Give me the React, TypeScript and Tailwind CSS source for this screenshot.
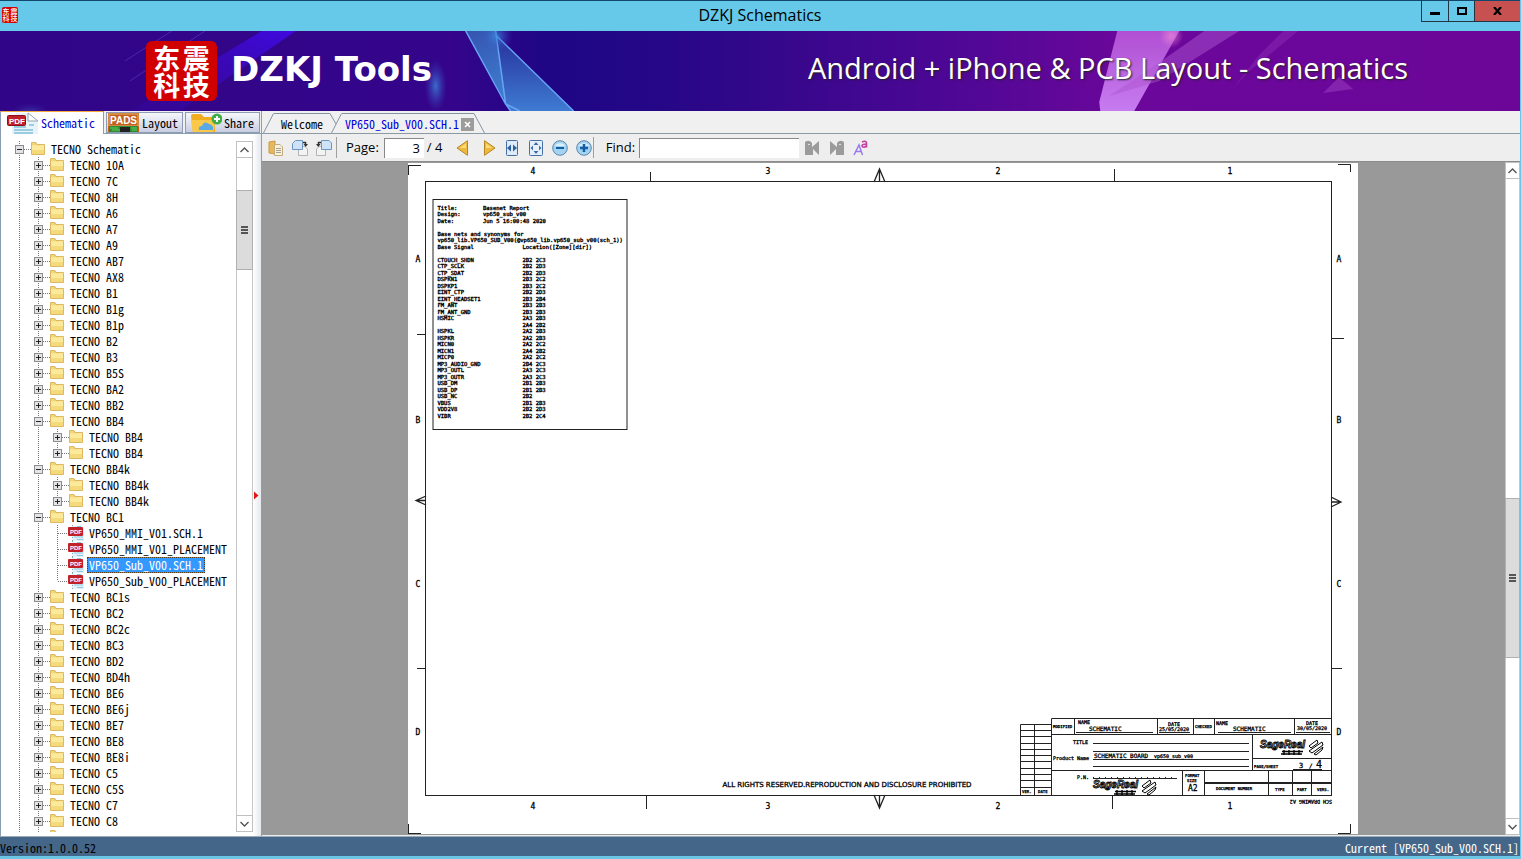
import React from "react";

const MONO = "font-['Noto_Sans_CJK_SC','Liberation_Mono',monospace] [font-feature-settings:'hwid']";

type Node = { name: string; level: number; kind: "open" | "closed" | "pdf"; selected?: boolean; last?: boolean };

const closed = (names: string[]): Node[] => names.map((n) => ({ name: "TECNO " + n, level: 1, kind: "closed" }));

const NODES: Node[] = [
  { name: "TECNO Schematic", level: 0, kind: "open" },
  ...closed(["10A", "7C", "8H", "A6", "A7", "A9", "AB7", "AX8", "B1", "B1g", "B1p", "B2", "B3", "B5S", "BA2", "BB2"]),
  { name: "TECNO BB4", level: 1, kind: "open" },
  { name: "TECNO BB4", level: 2, kind: "closed" },
  { name: "TECNO BB4", level: 2, kind: "closed", last: true },
  { name: "TECNO BB4k", level: 1, kind: "open" },
  { name: "TECNO BB4k", level: 2, kind: "closed" },
  { name: "TECNO BB4k", level: 2, kind: "closed", last: true },
  { name: "TECNO BC1", level: 1, kind: "open" },
  { name: "VP650_MMI_V01.SCH.1", level: 2, kind: "pdf" },
  { name: "VP650_MMI_V01_PLACEMENT", level: 2, kind: "pdf" },
  { name: "VP650_Sub_V00.SCH.1", level: 2, kind: "pdf", selected: true },
  { name: "VP650_Sub_V00_PLACEMENT", level: 2, kind: "pdf", last: true },
  ...closed(["BC1s", "BC2", "BC2c", "BC3", "BD2", "BD4h", "BE6", "BE6j", "BE7", "BE8", "BE8i", "C5", "C5S", "C7", "C8"]),
  { name: "", level: 1, kind: "closed" },
];

function Guide() {
  return (
    <svg width="19" height="16" className="shrink-0" aria-hidden="true">
      <path d="M4.5 0V16" stroke="#777" strokeDasharray="1 1" />
    </svg>
  );
}

function Expander({ kind, last }: { kind: Node["kind"]; last?: boolean }) {
  return (
    <svg width="16" height="16" className="shrink-0" aria-hidden="true">
      <path d={last ? "M4.5 0V8" : "M4.5 0V16"} stroke="#777" strokeDasharray="1 1" />
      <path d="M5 8.5H16" stroke="#777" strokeDasharray="1 1" />
      {kind !== "pdf" && (
        <>
          <rect x="0.5" y="4.5" width="8" height="8" fill="#e4e4e8" stroke="#8c8c8c" />
          <path d="M2 8.5H7" stroke="#222" />
          {kind === "closed" && <path d="M4.5 6V11" stroke="#222" />}
        </>
      )}
    </svg>
  );
}

function FolderIcon() {
  return (
    <svg width="15" height="16" className="shrink-0" aria-hidden="true">
      <path d="M0.5 1.5H5L6 3.5H13.5V13.5H0.5Z" fill="#f0d575" stroke="#dcb862" />
      <path d="M1 4L6 4.5L13 4V13H1Z" fill="#fbea9c" />
      <path d="M1 9H13V13H1Z" fill="#f5da7c" />
    </svg>
  );
}

function PdfIcon() {
  return (
    <svg width="15" height="16" className="shrink-0 overflow-visible" aria-hidden="true">
      <path d="M3 1H12L15 4V16H3Z" fill="#e2f2f8" />
      <path d="M5 12H14M8 14.5H14M8 1.5H12" stroke="#8ec8dc" />
      <path d="M3.5 0V16" stroke="#88aab5" strokeDasharray="1 2" />
      <rect x="-1" y="2" width="15" height="9" rx="1" fill="#c2202b" />
      <text x="1" y="9" fontSize="6" fontWeight="700" fill="#fff" fontFamily="Liberation Sans, sans-serif">PDF</text>
    </svg>
  );
}

function TreeRow({ node }: { node: Node }) {
  return (
    <li className="flex h-4 shrink-0 items-center">
      {Array.from({ length: node.level }, (_, i) => <Guide key={i} />)}
      <Expander kind={node.kind} last={node.last} />
      {node.kind === "pdf" ? <PdfIcon /> : <FolderIcon />}
      {node.name && (
        <button
          className={
            "ml-[3px] h-4 border border-dotted px-px text-left text-xs leading-[14px] whitespace-pre " +
            (node.selected ? "border-[#5a3a10] bg-[#3399ff] text-white" : "border-transparent text-black")
          }
        >
          {node.name}
        </button>
      )}
    </li>
  );
}

function ScrollBar({ before, after, thumb, width }: { before: string; after: string; thumb: string; width: string }) {
  const button = "flex h-[17px] w-full shrink-0 items-center justify-center border border-[#c0c0c0] bg-white";
  return (
    <div className={"flex shrink-0 flex-col bg-white " + width}>
      <button className={button} aria-label="Scroll up">
        <svg width="9" height="6" aria-hidden="true"><path d="M0.5 5L4.5 1L8.5 5" fill="none" stroke="#555" strokeWidth="1.4" /></svg>
      </button>
      <div className={"border-x border-[#c8c8c8] " + before} />
      <div className={"flex w-full shrink-0 items-center justify-center border border-[#b0b0b0] bg-[#dcdcdc] " + thumb}>
        <svg width="7" height="8" aria-hidden="true"><path d="M0 1H7M0 4H7M0 7H7" stroke="#555" strokeWidth="2" /></svg>
      </div>
      <div className={"border-x border-[#c8c8c8] " + after} />
      <button className={button} aria-label="Scroll down">
        <svg width="9" height="6" aria-hidden="true"><path d="M0.5 1L4.5 5L8.5 1" fill="none" stroke="#555" strokeWidth="1.4" /></svg>
      </button>
    </div>
  );
}

function TitleBar() {
  return (
    <header className="flex h-[31px] shrink-0 items-start border-t border-[#12466a] bg-[#66c9ea]">
      <div className="flex w-[100px] px-[2px] pt-[6px]">
        <div className="grid h-4 w-4 grid-cols-2 content-center justify-items-center rounded-[2px] bg-[#d40000] font-['Noto_Sans_CJK_SC',sans-serif] text-[7px] leading-[7px] font-medium text-white">
          <span>东</span><span>震</span><span>科</span><span>技</span>
        </div>
      </div>
      <h1 className="flex-1 text-center font-['Open_Sans',sans-serif] text-base leading-[29px] text-black">DZKJ Schematics</h1>
      <div className="flex h-[21px] w-[100px] justify-end">
        <button aria-label="Minimize" className="flex w-7 items-end justify-center border-x border-b border-[#234] pb-[6px]">
          <span className="h-[3px] w-[10px] bg-black" />
        </button>
        <button aria-label="Maximize" className="flex w-[26px] items-center justify-center border-r border-b border-[#234]">
          <span className="h-2 w-[10px] border-2 border-black" />
        </button>
        <button aria-label="Close" className="flex w-[45px] items-center justify-center border-b border-[#234] bg-[#c75050]">
          <svg width="9" height="8" aria-hidden="true"><path d="M1 0L8 8M8 0L1 8" stroke="#000" strokeWidth="2.2" /></svg>
        </button>
      </div>
    </header>
  );
}

function Banner() {
  return (
    <div className="relative flex h-20 shrink-0 items-center overflow-hidden bg-[#300688] pr-28 pl-[146px]">
      <svg className="absolute inset-0 h-full w-full" viewBox="0 0 1521 80" preserveAspectRatio="none" aria-hidden="true">
        <defs>
          <linearGradient id="base" x1="0" x2="1">
            <stop offset="0" stopColor="#310588" />
            <stop offset="0.3" stopColor="#34058a" />
            <stop offset="0.36" stopColor="#1e0684" />
            <stop offset="0.42" stopColor="#230786" />
            <stop offset="0.5" stopColor="#33078a" />
            <stop offset="0.62" stopColor="#4c0794" />
            <stop offset="0.74" stopColor="#6b079b" />
            <stop offset="1" stopColor="#6b0699" />
          </linearGradient>
          <linearGradient id="beam" x1="1" x2="0" y2="1">
            <stop offset="0" stopColor="#4009e0" />
            <stop offset="1" stopColor="#380bb0" stopOpacity="0.2" />
          </linearGradient>
          <linearGradient id="shard" x1="0" x2="0.3" y2="1">
            <stop offset="0" stopColor="#3553b0" />
            <stop offset="1" stopColor="#3d7fd0" />
          </linearGradient>
          <linearGradient id="facet" x1="0" x2="0" y2="1">
            <stop offset="0" stopColor="#26309c" />
            <stop offset="1" stopColor="#3f7bd2" />
          </linearGradient>
          <linearGradient id="pink" x1="0" x2="0" y2="1">
            <stop offset="0" stopColor="#b04fd2" />
            <stop offset="1" stopColor="#c77cf0" />
          </linearGradient>
          <radialGradient id="glow">
            <stop offset="0" stopColor="#3b8fe0" stopOpacity="0.75" />
            <stop offset="1" stopColor="#3b50c0" stopOpacity="0" />
          </radialGradient>
          <radialGradient id="flare">
            <stop offset="0" stopColor="#f088d8" stopOpacity="0.7" />
            <stop offset="1" stopColor="#f088d8" stopOpacity="0" />
          </radialGradient>
        </defs>
        <rect width="1521" height="80" fill="url(#base)" />
        <path d="M262 0H296L180 80H130Z" fill="url(#beam)" />
        <path d="M205 0L130 50M172 0L125 30" stroke="#5b3fc4" strokeOpacity="0.6" />
        <ellipse cx="436" cy="55" rx="11" ry="26" fill="url(#glow)" />
        <ellipse cx="30" cy="82" rx="20" ry="10" fill="url(#glow)" opacity="0.5" />
        <path d="M466 0H496L506 73L511 80L503 66Z" fill="url(#shard)" />
        <path d="M496 5L574 80H510L506 72Z" fill="url(#facet)" />
        <path d="M466 0L506 73L511 80M496 0L506 73L520 80M497 5L574 80" fill="none" stroke="#68a5f5" strokeWidth="1.5" />
        <circle cx="497" cy="5" r="16" fill="url(#glow)" />
        <path d="M1118 0H1180L1135 80H1101L1100 71Z" fill="url(#pink)" />
        <path d="M1205 0H1240L1160 50L1110 65L1165 28Z" fill="#ae55d0" fillOpacity="0.5" />
        <path d="M1284 0H1299L1248 42L1232 60L1260 24Z" fill="#9a3cc0" fillOpacity="0.35" />
        <path d="M1340 46L1354 58L1324 62Z" fill="#9538bd" fillOpacity="0.6" />
        <circle cx="1172" cy="5" r="12" fill="url(#flare)" />
      </svg>
      <div className="relative grid h-[60px] w-[71px] grid-cols-2 content-center justify-items-center rounded-md bg-[#d10000] px-[6px] font-['Noto_Sans_CJK_SC',sans-serif] text-[27px] leading-[27px] font-bold text-white">
        <span>东</span><span>震</span><span>科</span><span>技</span>
      </div>
      <span className="relative ml-[14px] pb-1 font-['DejaVu_Sans',sans-serif] text-[34px] leading-none font-bold text-white">DZKJ Tools</span>
      <span className="relative ml-auto pb-2 font-['Open_Sans',sans-serif] text-[29px] leading-none text-white [text-shadow:1px_1px_2px_#222]">
        Android + iPhone &amp; PCB Layout - Schematics
      </span>
    </div>
  );
}

function SideTabs() {
  const idle = "flex h-[21px] items-center overflow-hidden border border-[#8c9cb4] bg-linear-to-b from-[#f6f7fb] to-[#c9cde2] text-xs text-black";
  return (
    <div className="flex h-[23px] shrink-0 items-end border-b border-[#8ba0ae] bg-[#f0f0f0]" role="tablist">
      <button role="tab" aria-selected="true" className="-mb-px flex h-6 w-[104px] items-center overflow-hidden border-t-2 border-r border-l border-[#8c9cb4] border-t-[#f5a83c] bg-white pl-[5px] text-xs text-[#0000cc]">
        <svg width="34" height="22" aria-hidden="true">
          <path d="M10 1H22L32 10V22H6V13Z" fill="#e6f3f8" />
          <path d="M22 1V9H32Z" fill="#fff" stroke="#8fa6b0" />
          <path d="M8 15H20M8 18H27M8 21H27M23 13H28" stroke="#9cccdf" strokeWidth="2" />
          <rect x="1.5" y="3.5" width="18" height="10" rx="1" fill="#c2202b" stroke="#8d1018" />
          <text x="3" y="12" fontSize="8" fontWeight="700" fill="#fff" fontFamily="Liberation Sans, sans-serif">PDF</text>
        </svg>
        <span className="ml-px">Schematic</span>
      </button>
      <button role="tab" aria-selected="false" className={idle + " ml-[2px] w-[77px] pl-px"}>
        <svg width="31" height="19" className="shrink-0" aria-hidden="true">
          <rect width="31" height="19" fill="#c2611d" />
          <rect x="1" y="1" width="29" height="12" fill="none" stroke="#e9b36a" />
          <path d="M1 13H30V19H1Z" fill="#2f8b34" />
          <path d="M12 14H22V19H12Z" fill="#222" />
          <path d="M2 15H10M4 17H12M23 15H29M24 17H29" stroke="#63cf5b" />
          <text x="2" y="11" fontSize="10" fontWeight="700" fill="#fff" fontFamily="Liberation Sans, sans-serif">PADS</text>
        </svg>
        <span className="ml-[3px]">Layout</span>
      </button>
      <button role="tab" aria-selected="false" className={idle + " ml-[2px] w-[75px] pl-[5px]"}>
        <svg width="31" height="20" className="shrink-0" aria-hidden="true">
          <path d="M0 3Q0 1 2 1H10L13 4H24V20H2Z" fill="#f0ad20" />
          <path d="M0 7H25L22 20H2Z" fill="#fbc84a" />
          <path d="M8 17Q7 13 11 13Q13 7 18 11Q23 12 22 17Z" fill="#58a9e6" />
          <circle cx="26" cy="6" r="5.5" fill="#3fae49" />
          <path d="M23 6H29M26 3V9" stroke="#fff" strokeWidth="2" />
        </svg>
        <span className="ml-[2px]">Share</span>
      </button>
    </div>
  );
}

function Slant({ flip }: { flip?: boolean }) {
  return (
    <svg width="11" height="20" className="shrink-0" aria-hidden="true">
      <path d={flip ? "M0 0.5L10.5 20" : "M0.5 20L10.5 0.5"} fill="none" stroke="#8294a4" />
    </svg>
  );
}

function DocTabs() {
  return (
    <div className="flex h-[23px] shrink-0 items-end border-b border-[#8c9aa4] bg-[#f0f0f0] pl-px" role="tablist">
      <div className="flex">
        <Slant />
        <button role="tab" aria-selected="false" className="h-5 border-t border-[#8294a4] px-[7px] text-xs leading-[18px] text-black">Welcome</button>
        <svg width="6" height="20" aria-hidden="true"><path d="M0 0.5L6 11" stroke="#8294a4" /></svg>
      </div>
      <div className="-mb-px -ml-[5px] flex">
        <Slant />
        <div className="flex h-[21px] items-center border-t border-[#8294a4] pl-[3px] text-xs leading-[18px] text-[#0000dd]">
          <button role="tab" aria-selected="true">VP650_Sub_V00.SCH.1</button>
          <button aria-label="Close tab" className="ml-[2px] flex h-[13px] w-[13px] items-center justify-center bg-[#9c9c9c]">
            <svg width="7" height="7" aria-hidden="true"><path d="M1 1L6 6M6 1L1 6" stroke="#fff" strokeWidth="1.6" /></svg>
          </button>
        </div>
        <Slant flip />
      </div>
    </div>
  );
}

function IconButton({ label, className, children }: { label: string; className?: string; children: React.ReactNode }) {
  return (
    <button aria-label={label} title={label} className={"flex h-4 w-4 shrink-0 items-center justify-center " + (className ?? "")}>
      <svg width="16" height="16" aria-hidden="true">{children}</svg>
    </button>
  );
}

function Toolbar() {
  return (
    <div className="flex h-[27px] shrink-0 items-center bg-[#eeeeee] pl-[6px] font-['Open_Sans',sans-serif] text-[13px] text-black [font-feature-settings:normal]">
      <IconButton label="Copy">
        <path d="M1 2L7 1V14L1 13Z" fill="#e9b85c" stroke="#c99845" />
        <path d="M6.500 4.500H12L14.500 7V15.500H6.500Z" fill="#f8f1dc" stroke="#c3ac78" />
        <path d="M8 8.500H13M8 10.500H13M8 12.500H13" stroke="#a5a092" />
      </IconButton>
      <IconButton label="Rotate right" className="ml-2">
        <path d="M6.500 6.500H13L15.500 9V15.500H6.500Z" fill="#f3f3f3" stroke="#b5b5b5" />
        <path d="M3.500 0.500H10.500V9.500H0.500V3.500Z" fill="#cfe3f8" stroke="#6f95bf" />
        <path d="M11 2.500H13.500V5" fill="none" stroke="#333" strokeWidth="1.500" />
        <path d="M11.500 4H16L13.700 7Z" fill="#333" />
      </IconButton>
      <IconButton label="Rotate left" className="ml-2">
        <path d="M0.500 9L3 6.500H9.500V15.500H0.500Z" fill="#f3f3f3" stroke="#b5b5b5" />
        <path d="M5.500 0.500H13L15.500 3V9.500H5.500Z" fill="#cfe3f8" stroke="#6f95bf" />
        <path d="M5 2.500H2.500V5" fill="none" stroke="#333" strokeWidth="1.500" />
        <path d="M0 4H4.500L2.300 7Z" fill="#333" />
      </IconButton>
      <span className="ml-1 h-[21px] w-px bg-[#a0a0a0]" />
      <label htmlFor="page" className="ml-[9px]">Page:</label>
      <input id="page" defaultValue="3" className="ml-[5px] h-5 w-10 border-t border-l border-[#888] bg-white pr-1 text-right text-[13px]" />
      <span className="ml-[3px] w-5">/ 4</span>
      <IconButton label="Previous page" className="ml-2">
        <path d="M2 8L12.500 0.700V15.300Z" fill="#efba3c" stroke="#b78424" />
        <path d="M4.500 8L11 3.500V8Z" fill="#fbdc7c" />
      </IconButton>
      <IconButton label="Next page" className="ml-[10px]">
        <path d="M3.500 0.700L14 8L3.500 15.300Z" fill="#efba3c" stroke="#b78424" />
        <path d="M5 3.500L11.500 8H5Z" fill="#fbdc7c" />
      </IconButton>
      <IconButton label="Fit width" className="ml-[7px]">
        <rect x="2.500" y="0.500" width="11" height="15" rx="1" fill="#dceafa" stroke="#456fa3" />
        <path d="M3 8L7 4.500V11.500ZM13 8L9 4.500V11.500Z" fill="#2c5f9e" />
      </IconButton>
      <IconButton label="Fit page" className="ml-2">
        <rect x="1.500" y="0.500" width="13" height="15" rx="1" fill="#e6f0fb" stroke="#456fa3" />
        <path d="M8 2L10.500 5H5.500ZM8 14L10.500 11H5.500ZM2.500 8L5 5.500V10.500ZM13.500 8L11 5.500V10.500Z" fill="#3d6fab" />
      </IconButton>
      <IconButton label="Zoom out" className="ml-2">
        <circle cx="8" cy="8" r="7.300" fill="#a3d3f3" stroke="#5d86ab" />
        <path d="M2 6Q8 0 14 6Z" fill="#d8effc" />
        <path d="M4 8H12" stroke="#145fa4" strokeWidth="2" />
      </IconButton>
      <IconButton label="Zoom in" className="ml-2">
        <circle cx="8" cy="8" r="7.300" fill="#a3d3f3" stroke="#5d86ab" />
        <path d="M2 6Q8 0 14 6Z" fill="#d8effc" />
        <path d="M4 8H12M8 4V12" stroke="#145fa4" strokeWidth="2.500" />
      </IconButton>
      <span className="ml-px h-[21px] w-px bg-[#a0a0a0]" />
      <label htmlFor="find" className="ml-3">Find:</label>
      <input id="find" className="ml-1 h-5 w-[160px] border-t border-l border-[#888] bg-white px-1 text-[13px]" />
      <IconButton label="Find previous" className="ml-[5px]">
        <path d="M1 2Q5 -1 8 3V7L15 1V15L9 9V15H1Z" fill="#9b9b9b" />
        <path d="M4 4.500H6" stroke="#ddd" />
      </IconButton>
      <IconButton label="Find next" className="ml-[9px]">
        <path d="M1 1L8 7V3Q11 -1 15 2V15H7V9L1 15Z" fill="#9b9b9b" />
        <path d="M10 4.500H12" stroke="#ddd" />
      </IconButton>
      <IconButton label="Match case" className="ml-2">
        <path d="M1 15L6 5L9.500 15M2.500 11.500H8" fill="none" stroke="#9a7af0" strokeWidth="1.500" />
        <path d="M9 2Q13 0 13.500 3V7.500M13.500 4Q9 4 9 6Q10 8.500 13.500 6" fill="none" stroke="#c23fa2" strokeWidth="1.600" />
      </IconButton>
    </div>
  );
}

const SIGNALS: [string, string][] = [
  ["CTOUCH_SHDN", "2B2 2C3"], ["CTP_SCLK", "2B2 2D3"], ["CTP_SDAT", "2B2 2D3"], ["DSPKN1", "2B3 2C2"],
  ["DSPKP1", "2B3 2C2"], ["EINT_CTP", "2B2 2D3"], ["EINT_HEADSET1", "2B3 2B4"], ["FM_ANT", "2B3 2B3"],
  ["FM_ANT_GND", "2B3 2B3"], ["HSMIC", "2A3 2B3"], ["", "2A4 2B2"], ["HSPKL", "2A2 2B3"], ["HSPKR", "2A2 2B3"],
  ["MICN0", "2A2 2C2"], ["MICN1", "2A4 2B2"], ["MICP0", "2A2 2C2"], ["MP3_AUDIO_GND", "2B4 2C3"],
  ["MP3_OUTL", "2A3 2C3"], ["MP3_OUTR", "2A3 2C3"], ["USB_DM", "2B1 2B3"], ["USB_DP", "2B1 2B3"],
  ["USB_NC", "2B2"], ["VBUS", "2B1 2B3"], ["VDD2V8", "2B2 2D3"], ["VIBR", "2B2 2C4"],
];

const HEADER: [number, number, string][] = [
  [11, 0, "Title:"], [102, 0, "Basenet Report"],
  [11, 1, "Design:"], [102, 1, "vp650_sub_v00"],
  [11, 2, "Date:"], [102, 2, "Jun 5 16:00:48 2020"],
  [11, 4, "Base nets and synonyms for"],
  [11, 5, "vp650_lib.VP650_SUB_V00(@vp650_lib.vp650_sub_v00(sch_1))"],
  [11, 6, "Base Signal"], [181, 6, "Location([Zone][dir])"],
];

const LABELS: [number, number, number, string][] = [
  [645, 565, 4, "MODIFIED"], [670, 561, 5, "NAME"], [681, 568, 6, "SCHEMATIC"], [760, 563, 5, "DATE"],
  [751, 568, 5, "25/05/2020"], [787, 565, 4, "CHECKED"], [808, 562, 5, "NAME"], [825, 568, 6, "SCHEMATIC"],
  [898, 562, 5, "DATE"], [889, 567, 5, "30/05/2020"], [665, 581, 5, "TITLE"], [645, 597, 5, "Product Name"],
  [686, 595, 6, "SCHEMATIC BOARD"], [746, 595, 5, "vp650_sub_v00"], [669, 616, 5, "P.N."],
  [777, 614, 4, "FORMAT"], [779, 619, 4, "SIZE"], [780, 628, 8, "A2"], [808, 627, 4, "DOCUMENT NUMBER"],
  [867, 628, 4, "TYPE"], [889, 628, 4, "PART"], [909, 628, 4, "VERS."], [614, 630, 4, "VER."],
  [630, 630, 4, "DATE"], [846, 605, 4, "PAGE/SHEET"], [891, 605, 7, "3"], [901, 605, 6, "/"], [908, 605, 10, "4"],
];

function VendorLogo({ x, y }: { x: number; y: number }) {
  return (
    <g transform={`translate(${x} ${y})`}>
      <text x="0" y="8" fontSize="10" fontWeight="700" fontStyle="italic" fill="#fff" stroke="#000" strokeWidth="0.9" fontFamily="Liberation Sans, sans-serif">SageReal</text>
      <path d="M22 11.500H43M21 14H42M24 10V15M29 10V15M34 10V15M39 10V15" stroke="#000" strokeWidth="1.400" />
      <path d="M49 6L57 0L58 3L51 8ZM49 11L62 2L63 5L52 13ZM54 14L63 7L62 10L56 15Z" fill="#fff" stroke="#000" />
    </g>
  );
}

function Sheet() {
  const columns: [number, string][] = [[125, "4"], [360, "3"], [590, "2"], [822, "1"]];
  const rows: [number, string][] = [[99, "A"], [260, "B"], [424, "C"], [572, "D"]];
  return (
    <svg
      viewBox="0 0 950 671"
      className="w-[950px] shrink-0 bg-white font-['DejaVu_Sans_Mono',monospace] [font-feature-settings:normal]"
      role="img"
      aria-label="Schematic sheet 3 of 4"
    >
      <g fill="none" stroke="#222">
        <rect x="17.500" y="18.500" width="906" height="614" />
        <path d="M0 2.500H13M0.500 3V12M930 1.500H942.500V9M930 670.500H942.500V661M0 670.500H13M0.500 661V670" />
        <path d="M242.500 9V18M706.500 6V18M238.500 632V646M704.500 632V646M9 171.500H17M9 505.500H17M923 175.500H936M923 505.500H934" />
        <path d="M466 19L471.500 6L477 19M471.500 6V18M466 632L471.500 645L477 632M471.500 645V632M18 333L8 337.500L18 342M8 337.500H18M923 334L933 339L923 344M933 339H923" strokeWidth="1.300" />
        <path d="M643.500 632V555.500H923M612.500 632V561.500H643M626.500 561V632M612 567.500H643M612 573.500H643M612 580.500H643M612 586.500H643M612 592.500H643M612 598.500H643M612 605.500H643M612 611.500H643M612 617.500H643M612 624.500H643" />
        <path d="M643 571.500H923M643 607.500H923M666.500 555V571M749.500 555V571M785.500 555V571M806.500 555V571M886.500 555V571M844.500 571V607M844 595.500H923M774.500 607V632M796.500 607V632M860.500 607V632M884.500 607V632M903.500 607V632" />
        <path d="M668 569.500H745M810 569.500H883M751 569.500H782M888 569.500H922M685 580.500H841M685 588.500H841M685 596.500H841M685 603.500H841M885 606.500H914M685 615.500H769" />
        <path d="M685 614.500H769" strokeDasharray="1 5" />
        <path d="M796 620H923" strokeWidth="2" />
      </g>
      <g fill="#000" stroke="#000" strokeWidth="0.300">
        {columns.map(([x, t]) => (
          <g key={t} fontSize="8" textAnchor="middle">
            <text x={x} y="11">{t}</text>
            <text x={x} y="646">{t}</text>
          </g>
        ))}
        {rows.map(([y, t]) => (
          <g key={t} fontSize="8" textAnchor="middle">
            <text x="10" y={y}>{t}</text>
            <text x="931" y={y}>{t}</text>
          </g>
        ))}
        {LABELS.map(([x, y, size, t]) => (
          <text key={`${x}-${y}`} x={x} y={y} fontSize={size}>{t}</text>
        ))}
        <text x="439" y="624" fontSize="7" textAnchor="middle" fontFamily="DejaVu Sans, sans-serif">
          ALL RIGHTS RESERVED.REPRODUCTION AND DISCLOSURE PROHIBITED
        </text>
        <text transform="translate(924 637) rotate(180)" fontSize="5">SCH DRAWING A2</text>
      </g>
      <VendorLogo x={852} y={577} />
      <VendorLogo x={685} y={617} />
      <svg x="24" y="36" width="196" height="231" viewBox="0 0 392 462">
        <rect x="2" y="1" width="388" height="460" fill="none" stroke="#222" strokeWidth="2" />
        <g fontSize="11" fill="#000" stroke="#000" strokeWidth="0.700">
          {HEADER.map(([x, row, t]) => (
            <text key={`${x}-${row}`} x={x} y={21 + row * 13}>{t}</text>
          ))}
          {SIGNALS.map(([signal, location], i) => (
            <React.Fragment key={i}>
              {signal && <text x="11" y={125 + i * 13}>{signal}</text>}
              <text x="181" y={125 + i * 13}>{location}</text>
            </React.Fragment>
          ))}
        </g>
      </svg>
    </svg>
  );
}

export default function App() {
  return (
    <div className={"flex h-screen flex-col overflow-hidden border-r border-[#66c9ea] bg-[#f0f0f0] " + MONO}>
      <TitleBar />
      <Banner />
      <main className="flex min-h-0 flex-1">
        <aside className="flex w-[261px] shrink-0 flex-col">
          <SideTabs />
          <div className="flex min-h-0 flex-1 border-l border-[#8ba0ae] bg-white pt-[7px] pb-1">
            <ul className="flex min-h-0 flex-1 flex-col overflow-hidden pl-[14px]">
              {NODES.map((node, i) => <TreeRow key={i} node={node} />)}
            </ul>
            <ScrollBar width="w-[17px]" before="h-8" thumb="h-20" after="flex-1" />
            <div className="-mt-[7px] -mb-1 flex w-2 items-center bg-linear-to-r from-white to-[#e4e9ee] pt-5">
              <svg width="6" height="9" aria-hidden="true"><path d="M1 0.500L5.500 4.500L1 8.500Z" fill="#e01818" /></svg>
            </div>
          </div>
        </aside>
        <section className="flex min-w-0 flex-1 flex-col border-l border-[#8ba0ae]">
          <DocTabs />
          <Toolbar />
          <div className="flex min-h-0 flex-1 border-t border-b border-t-[#8c8c8c] border-b-[#e8eef2] bg-[#999999]">
            <div className="flex min-w-0 flex-1 items-start justify-center overflow-hidden pt-px pr-[2px]">
              <Sheet />
            </div>
            <ScrollBar width="w-[15px]" before="grow-[2]" thumb="h-40" after="grow" />
          </div>
        </section>
      </main>
      <footer className="flex h-[23px] shrink-0 items-end justify-between border-t border-b-[3px] border-t-[#a0aab4] border-b-[#6cc5e2] bg-[#446688] text-xs leading-4">
        <span className="text-black">Version:1.0.0.52</span>
        <span className="pr-px text-white">Current [VP650_Sub_V00.SCH.1]</span>
      </footer>
    </div>
  );
}
